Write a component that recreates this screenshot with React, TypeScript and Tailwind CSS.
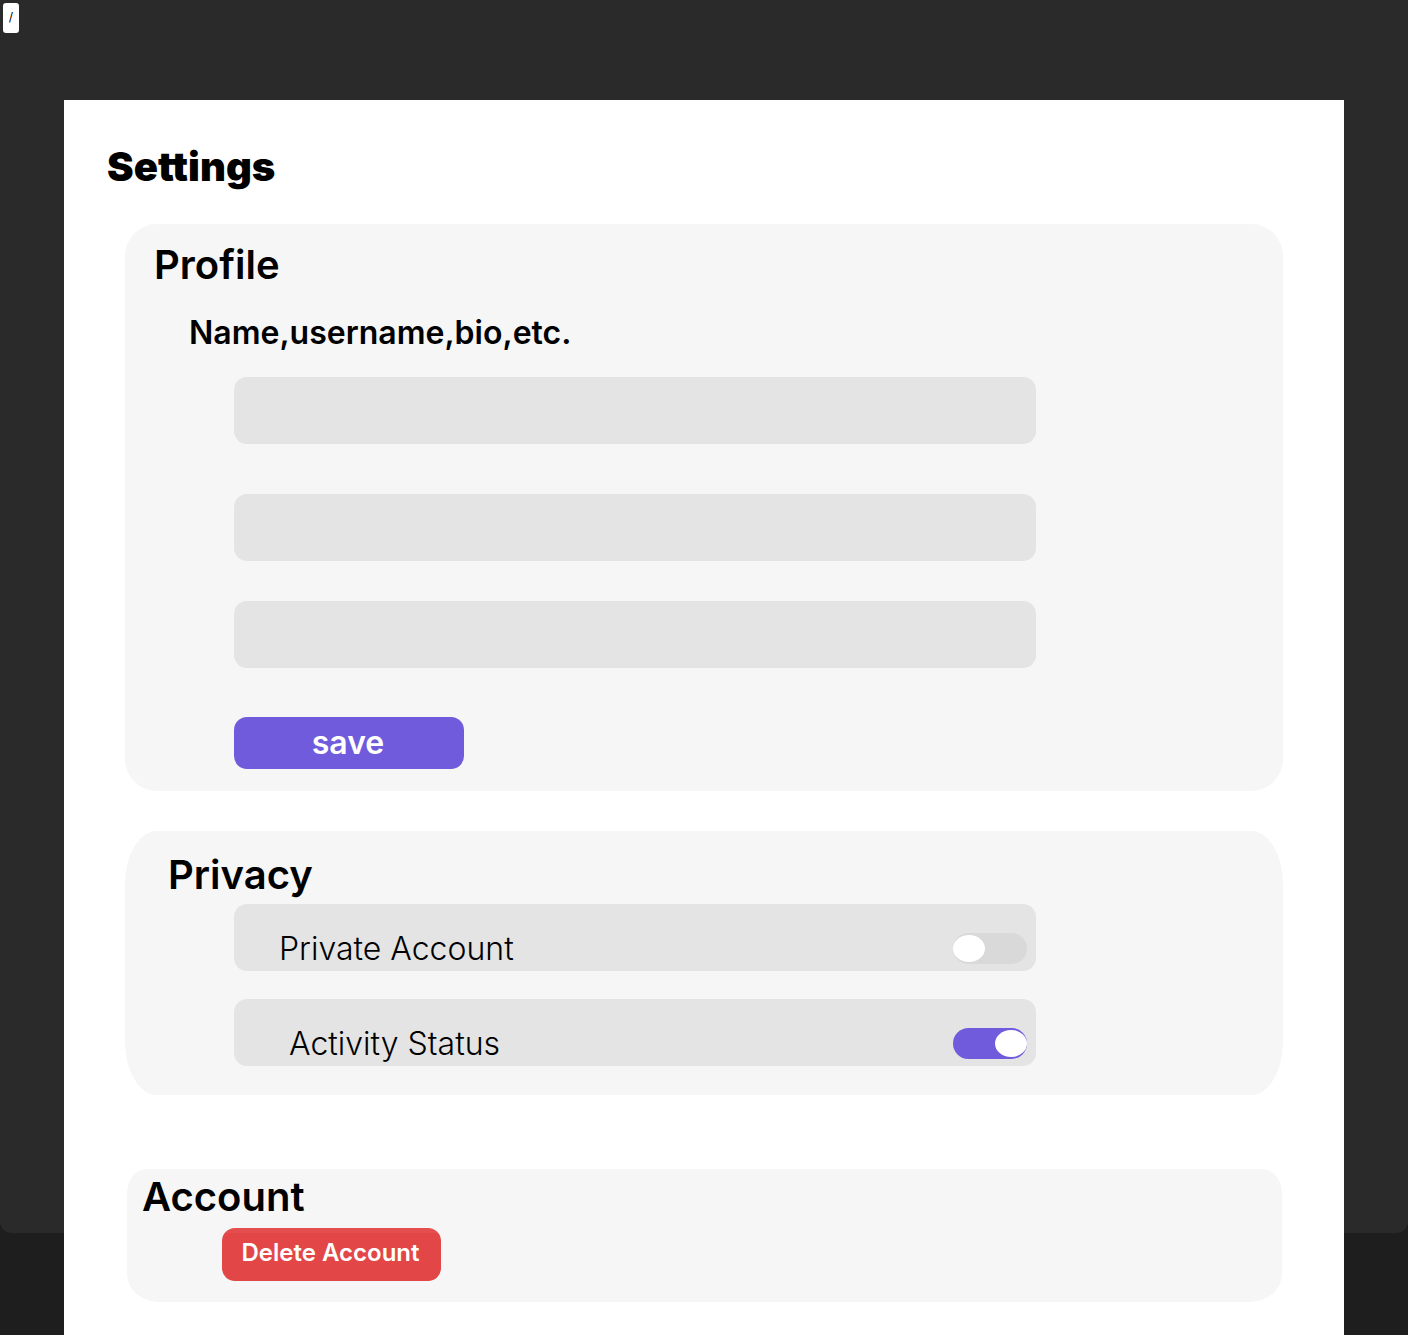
import { useState } from "react";

const field =
  "h-[67px] w-full rounded-[13px] bg-[#e4e4e4] px-5 text-2xl outline-none focus:ring-2 focus:ring-[#6f5bdc]";

function Toggle({ id, initial }: { id: string; initial: boolean }) {
  const [on, setOn] = useState(initial);
  return (
    <span className="relative mt-[29px] flex h-[31px] w-[74px] shrink-0">
      <input
        id={id}
        type="checkbox"
        role="switch"
        checked={on}
        onChange={() => setOn(!on)}
        className="peer h-full w-full cursor-pointer appearance-none rounded-full bg-[#d9d9d9] checked:bg-[#6f5bdc]"
      />
      <span className="pointer-events-none absolute top-[2px] left-0 h-[27px] w-8 rounded-[50%] bg-white peer-checked:left-[42px]" />
    </span>
  );
}

export default function App() {
  return (
    <div className="bg-[#1e1e1e] font-[Inter,sans-serif] text-black">
      <div className="grid">
        <div className="col-start-1 row-start-1 mb-[102px] rounded-b-xl bg-[#2a2a2a] p-[3px]">
          <span className="flex h-[30px] w-4 items-center justify-center rounded-[3px] bg-white pb-[2px] text-xs">/</span>
        </div>
        <main className="col-start-1 row-start-1 mx-16 mt-[100px] bg-white px-[61px] pb-[33px]">
          <h1 className="-ml-[18px] pt-[42px] text-[40px] leading-[50px] font-black">Settings</h1>

          <section className="mt-8 rounded-[32px] bg-[#f6f6f6] pt-4 pb-[22px]">
            <h2 className="ml-[29px] text-[40px] leading-[50px] font-semibold">Profile</h2>
            <h3 className="mt-[23px] ml-16 text-[32px] leading-10 font-semibold">Name,username,bio,etc.</h3>
            <form className="mr-[247px] ml-[109px] pt-6" onSubmit={(e) => e.preventDefault()}>
              <div className="flex flex-col">
                <input aria-label="Name" className={field} />
                <input aria-label="Username" className={field + " mt-[50px]"} />
                <input aria-label="Bio" className={field + " mt-10"} />
              </div>
              <button className="mt-[49px] h-[52px] w-[230px] rounded-[13px] bg-[#6f5bdc] pr-[2px] text-[32px] leading-10 font-semibold text-white">
                save
              </button>
            </form>
          </section>

          <section className="mt-10 rounded-[32px/53px] bg-[#f6f6f6] pt-[19px] pb-[29px]">
            <h2 className="ml-[43px] text-[40px] leading-[50px] font-semibold">Privacy</h2>
            <div className="mr-[247px] ml-[109px] flex flex-col gap-7 pt-1">
              <div className="flex h-[67px] justify-between rounded-[13px] bg-[#e4e4e4] pr-[9px] pl-[45px]">
                <label htmlFor="private" className="mt-[25px] text-[32px] leading-10 font-light">Private Account</label>
                <Toggle id="private" initial={false} />
              </div>
              <div className="flex h-[67px] justify-between rounded-[13px] bg-[#e4e4e4] pr-[9px] pl-[55px]">
                <label htmlFor="activity" className="mt-[25px] text-[32px] leading-10 font-light">Activity Status</label>
                <Toggle id="activity" initial={true} />
              </div>
            </div>
          </section>

          <section className="mt-[74px] mr-px ml-[2px] rounded-[20px_20px_32px_32px/24px_24px_28px_28px] bg-[#f6f6f6] pt-[3px] pb-[21px]">
            <h2 className="ml-[15px] text-[40px] leading-[50px] font-semibold">Account</h2>
            <button className="mt-[6px] ml-[95px] block h-[53px] w-[219px] rounded-[13px] bg-[linear-gradient(#e44e4e_5px,#e34646_5px)] pr-[2px] pb-1 text-2xl font-semibold text-white">
              Delete Account
            </button>
          </section>
        </main>
      </div>
    </div>
  );
}
